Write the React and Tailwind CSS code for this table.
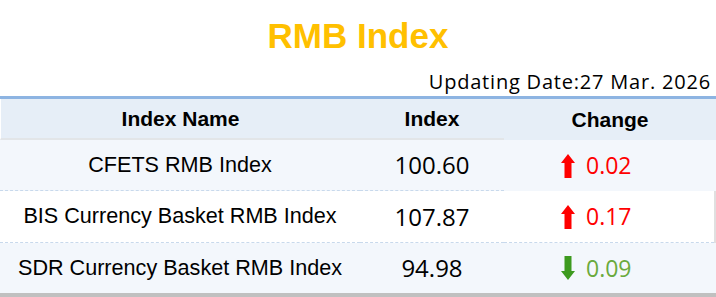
import React from "react";

const rows = [
  { name: "CFETS RMB Index", value: "100.60", change: "0.02", up: true },
  { name: "BIS Currency Basket RMB Index", value: "107.87", change: "0.17", up: true },
  { name: "SDR Currency Basket RMB Index", value: "94.98", change: "0.09", up: false },
];

const Arrow = ({ up }) => (
  <svg width="14" height="24" viewBox="0 0 14 24" className="shrink-0">
    {up ? (
      <path d="M7 0 L14 9 L10.5 9 L10.5 24 L3.5 24 L3.5 9 L0 9 Z" fill="#ff0000" />
    ) : (
      <path d="M7 24 L14 15 L10.5 15 L10.5 0 L3.5 0 L3.5 15 L0 15 Z" fill="#3d9a1f" />
    )}
  </svg>
);

export default function App() {
  return (
    <div className="w-[716px] h-[297px] bg-white overflow-hidden">
      <h1 className="h-[72px] pt-[12px] text-center text-[35px] font-bold leading-[48px] text-[#ffc000] font-['Liberation_Sans',Arial,sans-serif]">
        RMB Index
      </h1>
      <div className="h-[24px] pr-[5px] text-right text-[20px] leading-[20px] text-black font-['Open_Sans','Noto_Sans',sans-serif] tracking-[0.8px]">
        Updating Date:27 Mar. 2026
      </div>
      <div className="w-[716px] border-t-[3px] border-[#8db4e2] border-b-4 border-b-[#c0c0c0]">
        <div className="flex h-[41px] bg-[#e6eef7] font-bold text-[21px] text-black font-['Liberation_Sans',Arial,sans-serif]">
          <div className="w-[360px] flex items-center justify-center border-b-2 border-[#e2e5e8] border-l border-l-white">
            Index Name
          </div>
          <div className="w-[144px] flex items-center justify-center border-b-2 border-[#e2e5e8]">
            Index
          </div>
          <div className="flex-1 flex items-center justify-center">Change</div>
        </div>
        {rows.map((r, i) => (
          <div
            key={r.name}
            className={
              i === 1
                ? "flex h-[52px] bg-white border-r-2 border-[#e0e0e0]"
                : i === 0
                ? "flex h-[51px] bg-[#f3f7fc]"
                : "flex h-[50px] bg-[#f3f7fc]"
            }
          >
            <div
              className={
                i < 2
                  ? "w-[360px] flex items-center justify-center text-[21.6px] text-black font-['Liberation_Sans',Arial,sans-serif] border-b border-dashed border-[#c8d9ec]"
                  : "w-[360px] flex items-center justify-center text-[21.6px] text-black font-['Liberation_Sans',Arial,sans-serif]"
              }
            >
              {r.name}
            </div>
            <div
              className={
                i < 2
                  ? "w-[144px] flex items-center justify-center text-[24px] text-black font-['Open_Sans','Noto_Sans',sans-serif] border-b border-dashed border-[#c8d9ec]"
                  : "w-[144px] flex items-center justify-center text-[24px] text-black font-['Open_Sans','Noto_Sans',sans-serif]"
              }
            >
              {r.value}
            </div>
            <div
              className={
                i === 1
                  ? "flex-1 flex items-center pl-[57px] gap-[11px] border-b border-dashed border-[#c8d9ec]"
                  : "flex-1 flex items-center pl-[57px] gap-[11px]"
              }
            >
              <Arrow up={r.up} />
              <span
                className={
                  r.up
                    ? "text-[23px] text-[#ff0000] font-['Open_Sans','Noto_Sans',sans-serif]"
                    : "text-[23px] text-[#6aaa3c] font-['Open_Sans','Noto_Sans',sans-serif]"
                }
              >
                {r.change}
              </span>
            </div>
          </div>
        ))}
      </div>
    </div>
  );
}
